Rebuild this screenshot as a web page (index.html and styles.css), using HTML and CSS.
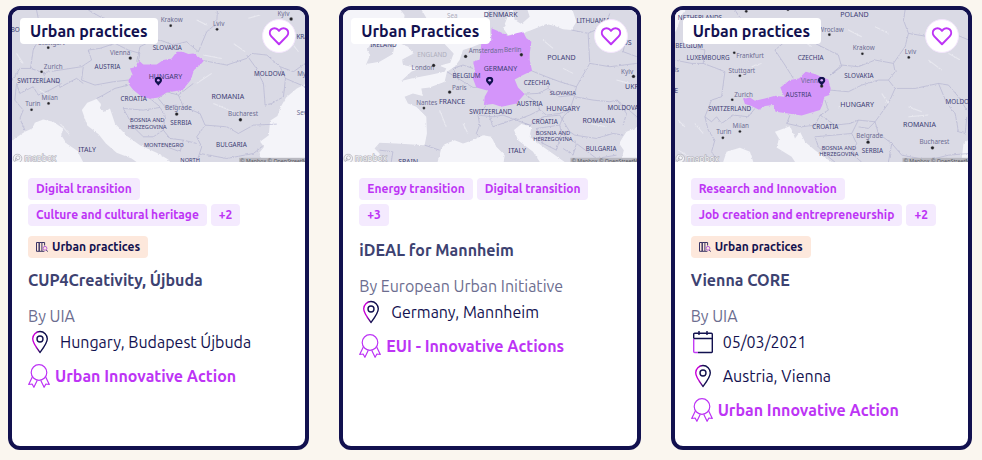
FILE: index.html
```html
<!DOCTYPE html>
<html lang="en">
<head>
<meta charset="utf-8">
<meta name="viewport" content="width=device-width, initial-scale=1">
<title>Urban practices</title>
<link rel="stylesheet" href="styles.css">
</head>
<body>
<svg class="sprite" aria-hidden="true">
  <defs>
    <filter id="coast" x="0" y="0" width="1" height="1">
      <feTurbulence type="fractalNoise" baseFrequency="0.12" numOctaves="2" seed="4"/>
      <feDisplacementMap in="SourceGraphic" scale="7" xChannelSelector="R" yChannelSelector="G"/>
    </filter>
    <linearGradient id="two-tone" x1="0" x2="1" y1="0" y2="0">
      <stop offset="0.2" stop-color="#c800d8"/><stop offset="0.5" stop-color="#12114f"/>
    </linearGradient>
  </defs>
  <symbol id="heart" viewBox="0 0 24 24"><path d="M12 21 3.6 12.4C1.5 10.200 1.500 7 3.500 5c2-2 5.200-2 7.200 0L12 6.400 13.300 5c2-2 5.200-2 7.200 0s2 5.200-.1 7.400Z" fill="none" stroke="#bd34f5" stroke-width="2.200" stroke-linejoin="round"/></symbol>
  <symbol id="pin" viewBox="0 0 24 24"><path d="M12 22.500C9 18.500 4.700 13 4.700 8.800a7.300 7.300 0 0 1 14.600 0c0 4.200-4.300 9.700-7.300 13.700Z" fill="none" stroke="url(#two-tone)" stroke-width="1.400" stroke-linejoin="round"/><circle cx="12" cy="9" r="3" fill="none" stroke="#12114f" stroke-width="1.400"/></symbol>
  <symbol id="calendar" viewBox="0 0 24 24"><path d="M2.700 8.500V4.200q0-1 1-1h16.600q1 0 1 1v17.600q0 .7-.7.700H7M2.700 8.500h18.600M8 1v4M16 1v4" fill="none" stroke="#12114f" stroke-width="1.400"/><path d="M2.700 9v12.500q0 1 1 1H7" fill="none" stroke="#c23cf5" stroke-width="1.400"/></symbol>
  <symbol id="award" viewBox="0 0 24 24"><g fill="none" stroke="#bd34f5" stroke-width="1.200" stroke-linejoin="round"><circle cx="11" cy="8.500" r="7.800"/><path d="M4.300 13 .7 20.500l3.400-.5 1.800 3.300 3.400-7M17.700 13l3.600 7.500-3.400-.5-1.800 3.300-3.400-7"/></g></symbol>
  <symbol id="library" viewBox="0 0 12 10"><g fill="none" stroke="#3b3566" stroke-width="1"><path d="M.5.500h2.700v8.800H.5ZM3.200.500h2.700v8.800H3.200ZM5.900.5h2.700v3"/><path d="M5.900 9.300h2.500M10.300 8l1.500 1.700"/></g><circle cx="9" cy="6.300" r="1.900" fill="none" stroke="#b660d8" stroke-width="1"/></symbol>
  <symbol id="marker" viewBox="0 0 24 28"><path d="M12 27C8 21 1 17 1 10.500a11 10.500 0 0 1 22 0C23 17 16 21 12 27Z" fill="#12114f"/><circle cx="12" cy="10.500" r="4" fill="#d3a4f6"/></symbol>
  <symbol id="mapbox" viewBox="0 0 130 30"><g fill="#f4f4f7" stroke="#a5a5ae" stroke-width="2"><circle cx="15" cy="15" r="13"/><circle cx="16" cy="13" r="6"/><path d="m8 22 2-8 5 5Z"/></g></symbol>
</svg>

<main class="cards">
  <article class="card">
    <div class="media">
      <svg class="map" viewBox="36 30 880 456" preserveAspectRatio="xMidYMid slice" role="img" aria-label="Map of Hungary">
        <rect class="land" x="30" y="20" width="900" height="480"/>
        <g filter="url(#coast)">
          <path class="sea" d="M20 440 45 415 75 395 97 385 105 368 130 358 160 365 190 385 184 405 200 430 232 452 250 486V500H20ZM246 330 262 308 290 297 303 312 300 325 315 335 330 325 345 370 382 408 420 435 470 458 505 478 520 500H430L395 475 350 458 318 430 296 402 262 376ZM930 245 890 265 858 292 842 320 832 348 810 362 806 405 780 425 792 440 776 460 790 486V500H930Z"/>
          <path class="line" d="M110 30 115 55 140 75 100 150 92 205M36 242 60 205 92 205 130 218 180 210 245 200 275 180 265 150 300 145 345 130 385 150 420 160 415 185M265 30 300 50 330 60M250 200 245 240 285 255 340 245 385 240M130 218 140 245 175 245 180 262 230 235 250 250M50 250 60 280 100 260 115 285 150 270 185 250M50 250 45 300 70 330 60 355 75 390M410 185 420 140 450 125 480 120 520 135 560 125 595 155M595 155 620 95 650 70 652 30M612 182 680 195 740 175 755 160 800 165 840 200 856 235 850 290 815 310 795 315 790 250 765 200 740 165M580 250 535 285 500 275 475 295 495 320 530 315M535 285 550 320 600 340 615 375 680 380 715 400 760 375 830 372M615 375 590 410 605 440 590 486M370 325 430 330 480 322 495 345 490 390 460 410 430 410 400 380 370 325M490 390 510 415 550 420 540 455 500 440M385 255 345 265 310 285 290 295M450 295 480 320M550 420 590 430M600 460 680 475 760 460 785 440M840 200 880 215 915 190M856 235 915 260"/>
          <path class="road" d="M330 70 350 85M590 60l30 15M50 160l20 30M120 270l40 25M590 250l45-30M640 310l60 25M700 130l35 25M745 55l35-10M180 370l30 35M660 430l35 10M150 130l35-35M860 110l35 45M610 165l55 10"/>
          <path class="country" d="M385 240 398 225 390 205 410 200 418 183 430 193 470 193 490 180 515 175 530 155 548 155 565 162 580 160 595 170 612 182 600 195 582 210 572 240 548 270 500 277 475 292 450 296 425 290 400 270 388 255Z"/>
        </g>
        <g class="country-name">
          <text x="52" y="248">SWITZERLAND</text><text x="284" y="208">AUSTRIA</text><text x="458" y="151">SLOVAKIA</text><text x="362" y="304">CROATIA</text><text x="762" y="228">MOLDOVA</text><text x="511" y="374">SERBIA</text><text x="648" y="442">BULGARIA</text><text x="875" y="118">UKRAINE</text><text x="-30" y="96">LUXEMBOURG</text>
        </g>
        <g class="country-name small"><text x="390" y="367">BOSNIA AND</text><text x="383" y="386">HERZEGOVINA</text><text x="432" y="441">MONTENEGRO</text><text x="541" y="486">NORTH</text></g>
        <g class="country-name large"><text x="446" y="236">HUNGARY</text><text x="634" y="296">ROMANIA</text><text x="235" y="456">ITALY</text></g>
        <g class="city"><text x="482" y="66">Krakow</text><text x="639" y="79">Lviv</text><text x="832" y="48">Kyiv</text><text x="330" y="165">Vienna</text><text x="132" y="208">Zurich</text><text x="125" y="300">Milan</text><text x="76" y="319">Turin</text><text x="495" y="330">Belgrade</text><text x="684" y="348">Bucharest</text><text x="115" y="136">Stuttgart</text><text x="891" y="227">Mykolaiv</text><text x="890" y="345">Sevastopol</text></g>
        <g class="dot"><circle cx="512" cy="77" r="4"/><circle cx="651" cy="88" r="4"/><circle cx="873" cy="57" r="5"/><circle cx="391" cy="174" r="5"/><circle cx="125" cy="215" r="4"/><circle cx="145" cy="143" r="4"/><circle cx="146" cy="310" r="4"/><circle cx="95" cy="329" r="4"/><circle cx="530" cy="342" r="5"/><circle cx="721" cy="359" r="5"/></g>
        <use href="#marker" x="463" y="230" width="24" height="28"/>
        <use href="#mapbox" x="38" y="460" width="130" height="30"/><text class="wordmark" x="73" y="484">mapbox</text>
        <rect class="credit-bg" x="717" y="473" width="220" height="20"/><text class="credit" x="720" y="488">© Mapbox © OpenStreetMap</text>
      </svg>
      <span class="type">Urban practices</span>
      <button class="favorite" type="button" aria-label="Add to favorites"><svg><use href="#heart"/></svg></button>
    </div>
    <div class="content">
      <ul class="topics"><li>Digital transition</li><li>Culture and cultural heritage</li><li>+2</li></ul>
      <span class="badge"><svg><use href="#library"/></svg>Urban practices</span>
      <h2>CUP4Creativity, Újbuda</h2>
      <p class="author">By UIA</p>
      <ul class="facts">
        <li><svg><use href="#pin"/></svg>Hungary, Budapest Újbuda</li>
        <li class="program"><svg><use href="#award"/></svg>Urban Innovative Action</li>
      </ul>
    </div>
  </article>

  <article class="card">
    <div class="media">
      <svg class="map" viewBox="39 30 882 456" preserveAspectRatio="xMidYMid slice" role="img" aria-label="Map of Germany">
        <rect class="water" x="30" y="20" width="900" height="480"/>
        <g filter="url(#coast)">
          <path class="shore" d="M205 20 225 45 215 132 235 140 252 160 218 178 220 195 270 205 245 215 215 243 245 235 300 225 345 215 350 205 330 197 362 188 372 160 345 132 300 70 270 20ZM130 120 198 120 190 162 150 185 110 192 122 165 112 150Z"/>
          <path class="shore" d="M225 290 250 280 280 288 275 265 300 262 345 245 352 215 375 200 390 180 400 150 430 140 450 132 485 125 480 85 470 50 480 20H545L530 60 520 85 535 105 570 102 600 92 650 72 675 78 700 88 725 90 740 65 725 20H940V375L890 395 880 410 868 430 882 450 870 500H725L690 475 640 440 600 410 605 380 575 372 553 390 565 420 610 455 640 500H520L525 465 500 440 485 410 460 405 430 420 400 430 375 420 345 432 335 445 320 500H155L150 460 135 445 150 428 200 430 285 435 292 400 290 350 260 320 235 310ZM502 65 520 58 528 78 512 88Z"/>
          <path class="shore" d="M550 30 590 20 600 50 575 72 555 60Z"/>
          <path class="line" d="M352 215 385 235 430 262 440 262M385 235 370 205 400 195 430 205M475 310 445 345 450 375 440 400 450 410M445 345 490 350 520 345 560 360 600 345 630 330 625 310 590 285M605 212 650 230 690 245 740 260 780 190 775 100 725 90M585 282 625 280 655 265 660 250M655 265 690 290 735 285 740 260M625 325 650 345 690 340 720 330 735 285M560 360 600 375 640 350 690 345 720 395 735 405 800 415 850 400 880 405M735 290 790 300 840 305 862 300 890 340 880 375M720 330 700 350 690 375 620 385 640 430 680 450 695 400 690 375M695 400 740 430 730 465 700 445M740 430 800 475 860 465M780 190 840 200 921 190M775 100 830 75 840 40M285 435 330 450M600 375 585 370M150 450 190 455 185 486M480 350 490 380 560 355M830 75 890 110 880 155 921 170M862 300 921 350"/>
          <path class="road" d="M640 120l30 25M700 205l30 15M780 370l50 10M330 330l20 50M400 370l15 30M860 240l40 10"/>
          <path class="country" d="M485 85 510 95 535 108 560 100 580 95 590 115 605 125 600 160 600 180 607 212 580 225 555 238 565 262 585 282 560 310 515 320 490 312 463 315 465 290 475 272 440 262 430 235 435 205 430 185 450 178 455 130 485 122Z"/>
        </g>
        <g class="country-name"><text x="122" y="141">IRELAND</text><text x="369" y="233">BELGIUM</text><text x="582" y="254">CZECHIA</text><text x="561" y="318">AUSTRIA</text><text x="419" y="341">SWITZERLAND</text><text x="606" y="372">CROATIA</text><text x="833" y="329">MOLDOVA</text><text x="768" y="452">BULGARIA</text><text x="740" y="68">LITHUANIA</text></g>
        <g class="country-name small"><text x="660" y="285">SLOVAKIA</text><text x="618" y="405">BOSNIA AND</text><text x="611" y="422">HERZEGOVINA</text></g>
        <g class="country-name large"><text x="462" y="52">DENMARK</text><text x="462" y="212">GERMANY</text><text x="653" y="180">POLAND</text><text x="328" y="311">FRANCE</text><text x="650" y="333">HUNGARY</text><text x="758" y="368">ROMANIA</text><text x="536" y="459">ITALY</text><text x="206" y="491">SPAIN</text><text x="886" y="267">UKRAINE</text><text x="816" y="134">BELARUS</text></g>
        <g class="country-name faint"><text x="263" y="171">ENGLAND</text><text x="352" y="53">Sea</text></g>
        <g class="city"><text x="417" y="160">Amsterdam</text><text x="523" y="156">Berlin</text><text x="246" y="210">London</text><text x="367" y="270">Paris</text><text x="260" y="315">Nantes</text><text x="874" y="221">Kyiv</text></g>
        <g class="dot"><circle cx="408" cy="169" r="5"/><circle cx="575" cy="164" r="5"/><circle cx="312" cy="196" r="5"/><circle cx="360" cy="276" r="5"/><circle cx="283" cy="324" r="4"/><circle cx="911" cy="229" r="5"/></g>
        <use href="#marker" x="468" y="230" width="24" height="28"/>
        <use href="#mapbox" x="41" y="460" width="130" height="30"/><text class="wordmark" x="76" y="484">mapbox</text>
        <rect class="credit-bg" x="722" y="473" width="220" height="20"/><text class="credit" x="725" y="488">© Mapbox © OpenStreetMap</text>
      </svg>
      <span class="type">Urban Practices</span>
      <button class="favorite" type="button" aria-label="Add to favorites"><svg><use href="#heart"/></svg></button>
    </div>
    <div class="content">
      <ul class="topics"><li>Energy transition</li><li>Digital transition</li><li>+3</li></ul>
      <h2>iDEAL for Mannheim</h2>
      <p class="author">By European Urban Initiative</p>
      <ul class="facts">
        <li><svg><use href="#pin"/></svg>Germany, Mannheim</li>
        <li class="program"><svg><use href="#award"/></svg>EUI - Innovative Actions</li>
      </ul>
    </div>
  </article>

  <article class="card">
    <div class="media">
      <svg class="map" viewBox="39 30 882 456" preserveAspectRatio="xMidYMid slice" role="img" aria-label="Map of Austria">
        <rect class="land" x="30" y="20" width="900" height="480"/>
        <g filter="url(#coast)">
          <path class="sea" d="M340 395 385 378 393 395 400 415 415 395 430 425 460 450 510 486 520 500H410L390 470 345 442 352 415ZM180 500 195 455 235 443 265 455 280 500ZM940 405 905 430 897 500H940ZM30 20H80L60 45 45 90 30 110Z"/>
          <path class="line" d="M90 140 130 150 125 190 165 205 190 215 180 290 150 300 130 350 150 365 165 350 180 370 215 345 260 350 280 325M340 150 370 125 410 110 450 125 500 150 530 165 540 200 505 225M340 150 370 195 395 235M505 225 540 195 590 200 640 180 695 190 700 215 680 240M505 270 560 275 600 255 650 240 680 240 700 265 760 265 830 250 860 255 890 290 915 330M830 250 855 310 880 340 890 395 910 400 915 350M695 190 730 140 740 100 725 60 730 30M385 345 375 370 420 380 460 375 475 345 500 330 490 300M475 345 520 375 565 370 590 360 640 365 680 310 700 265M590 360 570 400 460 410 470 440 500 470 520 486M570 400 585 430 570 460 600 486M640 365 650 400 690 430 720 465 800 480 860 465 921 460M640 365 620 385 590 380M130 350 140 390 160 420 150 455 170 486M39 180 90 190 125 190M230 130 200 100 240 60 220 30M740 100 800 110 850 90 921 120M690 430 680 486M410 110 430 60 470 80"/>
          <path class="road" d="M100 370l25 30M50 360l20 20M420 120l30 20M560 90l40 20M600 220l30 20M640 80l40 20M660 280l20 30M740 350l60-5M740 320l40 15M800 180l40 30M530 320l50-10M50 450l35 20M220 370l30 5M270 200l30-10M860 160l35 20"/>
          <path class="country" d="M432 215 460 222 478 230 500 238 507 265 503 285 488 290 482 315 475 330 420 346 380 340 342 335 335 315 310 318 292 329 270 318 250 312 245 297 265 292 280 302 310 295 340 287 368 290 356 262 385 240 412 235Z"/>
        </g>
        <g class="country-name"><text x="49" y="59">NETHERLANDS</text><text x="41" y="143">BELGIUM</text><text x="75" y="179">LUXEMBOURG</text><text x="408" y="181">CZECHIA</text><text x="548" y="235">SLOVAKIA</text><text x="372" y="292">AUSTRIA</text><text x="140" y="332">SWITZERLAND</text><text x="452" y="388">CROATIA</text><text x="600" y="458">SERBIA</text><text x="851" y="312">MOLDOVA</text></g>
        <g class="country-name small"><text x="480" y="450">BOSNIA AND</text><text x="473" y="469">HERZEGOVINA</text></g>
        <g class="country-name large"><text x="536" y="52">POLAND</text><text x="536" y="320">HUNGARY</text><text x="724" y="380">ROMANIA</text><text x="38" y="280">E</text></g>
        <g class="city"><text x="470" y="95">Wroclaw</text><text x="573" y="150">Krakow</text><text x="729" y="163">Lviv</text><text x="224" y="173">Frankfurt</text><text x="201" y="219">Stuttgart</text><text x="418" y="249">Vienna</text><text x="218" y="292">Zurich</text><text x="213" y="384">Milan</text><text x="164" y="403">Turin</text><text x="584" y="414">Belgrade</text><text x="773" y="432">Bucharest</text><text x="39" y="215">is</text></g>
        <g class="dot"><circle cx="503" cy="104" r="4"/><circle cx="602" cy="161" r="4"/><circle cx="741" cy="172" r="4"/><circle cx="218" cy="158" r="4"/><circle cx="235" cy="227" r="4"/><circle cx="480" cy="258" r="5"/><circle cx="212" cy="299" r="4"/><circle cx="235" cy="394" r="4"/><circle cx="184" cy="413" r="4"/><circle cx="619" cy="426" r="5"/><circle cx="812" cy="443" r="5"/><circle cx="254" cy="34" r="4"/><circle cx="379" cy="29" r="4"/></g>
        <use href="#marker" x="468" y="230" width="24" height="28"/>
        <use href="#mapbox" x="41" y="460" width="130" height="30"/><text class="wordmark" x="76" y="484">mapbox</text>
        <rect class="credit-bg" x="722" y="473" width="220" height="20"/><text class="credit" x="725" y="488">© Mapbox © OpenStreetMap</text>
      </svg>
      <span class="type">Urban practices</span>
      <button class="favorite" type="button" aria-label="Add to favorites"><svg><use href="#heart"/></svg></button>
    </div>
    <div class="content">
      <ul class="topics"><li>Research and Innovation</li><li>Job creation and entrepreneurship</li><li>+2</li></ul>
      <span class="badge"><svg><use href="#library"/></svg>Urban practices</span>
      <h2>Vienna CORE</h2>
      <p class="author">By UIA</p>
      <ul class="facts">
        <li><svg><use href="#calendar"/></svg>05/03/2021</li>
        <li><svg><use href="#pin"/></svg>Austria, Vienna</li>
        <li class="program"><svg><use href="#award"/></svg>Urban Innovative Action</li>
      </ul>
    </div>
  </article>
</main>
</body>
</html>
```
FILE: styles.css
```css
* { box-sizing: border-box; }

body {
  margin: 0;
  background: #faf6ef;
  color: #12114f;
  font: 16px/24px Ubuntu, "Noto Sans", sans-serif;
}

h2, p, ul { margin: 0; padding: 0; }
ul { list-style: none; }

.sprite { position: absolute; width: 0; height: 0; }

.cards {
  display: grid;
  grid-template-columns: repeat(3, minmax(0, 1fr));
  gap: 30px;
  padding: 6px 10px 10px 8px;
}

.card {
  overflow: hidden;
  border: 4px solid #12114f;
  border-radius: 12px;
  background: #fff;
}

.media { position: relative; }

.map {
  display: block;
  width: 100%;
  aspect-ratio: 293 / 152;
  font-family: "Noto Sans", sans-serif;
}

.land, .shore { fill: #dadae5; }
.sea, .water { fill: #f4f4f9; }
.line { fill: none; stroke: #b4b3d0; stroke-width: 2; stroke-linejoin: round; }
.road { fill: none; stroke: #e9e9f0; stroke-width: 3; }
.country { fill: #d495fa; }
.country-name { fill: #3c3c74; font-size: 19px; }
.country-name.small { font-size: 17px; }
.country-name.large { font-size: 21px; }
.country-name.faint { fill: #aeaebc; }
.city { fill: #6c6c92; font-size: 19px; }
.dot { fill: #222226; stroke: #a9a9b3; stroke-width: 1px; }
.wordmark { fill: #f6f6f9; stroke: #a5a5ae; stroke-width: 3px; paint-order: stroke; font-size: 25px; }
.credit-bg { fill: #b9b9c1; }
.credit { fill: #55555e; font-size: 16px; }

.type {
  position: absolute;
  top: 8px;
  left: 8px;
  padding: 1px 11px 1px 10px;
  border-radius: 4px;
  background: #fff;
  font-weight: 700;
}

.favorite {
  position: absolute;
  top: 9px;
  right: 9px;
  display: grid;
  place-items: center;
  width: 34px;
  height: 34px;
  padding: 0;
  border: 1px solid #f4e6fd;
  border-radius: 50%;
  background: #fff;
}
.favorite svg { width: 22px; height: 22px; }

.content { padding: 16px 16px 24px; }

.topics { display: flex; flex-wrap: wrap; gap: 4px; }
.topics li {
  padding: 0 8px;
  border-radius: 4px;
  background: #f4eafe;
  color: #bd34f5;
  font-size: 12px;
  font-weight: 700;
  line-height: 22px;
}

.badge {
  display: flex;
  align-items: center;
  gap: 4px;
  width: fit-content;
  margin-top: 10px;
  padding: 0 8px;
  border-radius: 4px;
  background: #fde8dc;
  font-size: 12px;
  font-weight: 700;
  line-height: 22px;
}
.badge svg { width: 12px; height: 10px; }

h2 {
  margin: 12px 0;
  color: #3d4271;
  font-size: 16px;
  font-weight: 700;
}
.badge + h2 { margin-top: 10px; }

.author { margin-bottom: 2px; color: #6c6d8f; }

.facts { display: grid; gap: 10px; }
.facts li { display: flex; align-items: center; gap: 8px; }
.facts svg { flex: none; width: 24px; height: 24px; }
.facts .program { gap: 3px; color: #bd34f5; font-weight: 700; }
```
